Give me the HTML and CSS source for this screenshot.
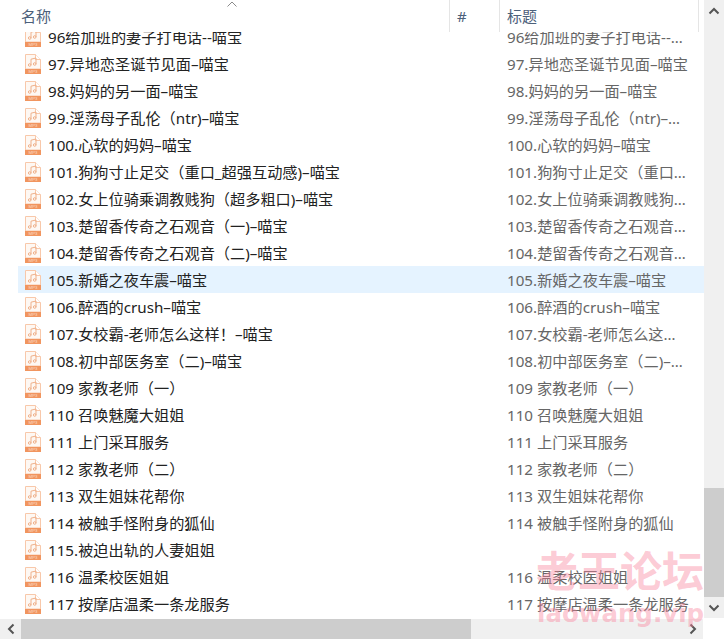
FILE: index.html
```html
<!DOCTYPE html>
<html>
<head>
<meta charset="utf-8">
<title>名称</title>
<link rel="stylesheet" href="styles.css">
</head>

<body>
<svg class="defs" width="0" height="0">
	<symbol id="mp3" viewBox="0 0 16 20">
		<path d="M0.5 0.5H10.5L15.5 5.5V15H0.5Z" fill="#fef8f3" stroke="#f8c8aa"/>
		<path d="M10.5 0.5V5.5H15.5" fill="#fff" stroke="#f8c8aa"/>
		<path d="M6 11V5.2L11 4V10" fill="none" stroke="#efb08a"/>
		<circle cx="4.7" cy="11" r="1.3" fill="none" stroke="#efb08a"/>
		<circle cx="9.7" cy="10" r="1.3" fill="none" stroke="#efb08a"/>
		<rect x="0" y="15" width="16" height="5" fill="#f1955f"/>
		<text x="8" y="19.2" text-anchor="middle" font-size="4.4" fill="#fbd9c4" font-family="Liberation Sans">MP3</text>
	</symbol>
</svg>

<div class="window">
	<div class="main">
		<div class="head">
			<div class="head_name">
				<svg class="caret" width="10" height="6" viewBox="0 0 10 6"><path d="M0.5 5.5L5 1L9.5 5.5" fill="none" stroke="#8a8a8a"/></svg>
				<span>名称</span>
			</div>
			<div class="head_num">#</div>
			<div class="head_title">标题</div>
			<div class="head_rest"></div>
		</div>

		<div class="list">
			<div class="rows">
				<div class="row"><svg class="icon"><use href="#mp3"/></svg><span class="name">96给加班的妻子打电话--喵宝</span><span class="title">96给加班的妻子打电话--喵宝</span></div>
				<div class="row"><svg class="icon"><use href="#mp3"/></svg><span class="name">97.异地恋圣诞节见面–喵宝</span><span class="title">97.异地恋圣诞节见面–喵宝</span></div>
				<div class="row"><svg class="icon"><use href="#mp3"/></svg><span class="name">98.妈妈的另一面–喵宝</span><span class="title">98.妈妈的另一面–喵宝</span></div>
				<div class="row"><svg class="icon"><use href="#mp3"/></svg><span class="name">99.淫荡母子乱伦（ntr)–喵宝</span><span class="title">99.淫荡母子乱伦（ntr)–喵宝</span></div>
				<div class="row"><svg class="icon"><use href="#mp3"/></svg><span class="name">100.心软的妈妈–喵宝</span><span class="title">100.心软的妈妈–喵宝</span></div>
				<div class="row"><svg class="icon"><use href="#mp3"/></svg><span class="name">101.狗狗寸止足交（重口_超强互动感)–喵宝</span><span class="title">101.狗狗寸止足交（重口_超强互动感)–喵宝</span></div>
				<div class="row"><svg class="icon"><use href="#mp3"/></svg><span class="name">102.女上位骑乘调教贱狗（超多粗口)–喵宝</span><span class="title">102.女上位骑乘调教贱狗（超多粗口)–喵宝</span></div>
				<div class="row"><svg class="icon"><use href="#mp3"/></svg><span class="name">103.楚留香传奇之石观音（一)–喵宝</span><span class="title">103.楚留香传奇之石观音（一)–喵宝</span></div>
				<div class="row"><svg class="icon"><use href="#mp3"/></svg><span class="name">104.楚留香传奇之石观音（二)–喵宝</span><span class="title">104.楚留香传奇之石观音（二)–喵宝</span></div>
				<div class="row row_on"><svg class="icon"><use href="#mp3"/></svg><span class="name">105.新婚之夜车震–喵宝</span><span class="title">105.新婚之夜车震–喵宝</span></div>
				<div class="row"><svg class="icon"><use href="#mp3"/></svg><span class="name">106.醉酒的crush–喵宝</span><span class="title">106.醉酒的crush–喵宝</span></div>
				<div class="row"><svg class="icon"><use href="#mp3"/></svg><span class="name">107.女校霸-老师怎么这样！–喵宝</span><span class="title">107.女校霸-老师怎么这样！–喵宝</span></div>
				<div class="row"><svg class="icon"><use href="#mp3"/></svg><span class="name">108.初中部医务室（二)–喵宝</span><span class="title">108.初中部医务室（二)–喵宝</span></div>
				<div class="row"><svg class="icon"><use href="#mp3"/></svg><span class="name">109 家教老师（一）</span><span class="title">109 家教老师（一）</span></div>
				<div class="row"><svg class="icon"><use href="#mp3"/></svg><span class="name">110 召唤魅魔大姐姐</span><span class="title">110 召唤魅魔大姐姐</span></div>
				<div class="row"><svg class="icon"><use href="#mp3"/></svg><span class="name">111 上门采耳服务</span><span class="title">111 上门采耳服务</span></div>
				<div class="row"><svg class="icon"><use href="#mp3"/></svg><span class="name">112 家教老师（二）</span><span class="title">112 家教老师（二）</span></div>
				<div class="row"><svg class="icon"><use href="#mp3"/></svg><span class="name">113 双生姐妹花帮你</span><span class="title">113 双生姐妹花帮你</span></div>
				<div class="row"><svg class="icon"><use href="#mp3"/></svg><span class="name">114 被触手怪附身的狐仙</span><span class="title">114 被触手怪附身的狐仙</span></div>
				<div class="row"><svg class="icon"><use href="#mp3"/></svg><span class="name">115.被迫出轨的人妻姐姐</span><span class="title"></span></div>
				<div class="row"><svg class="icon"><use href="#mp3"/></svg><span class="name">116 温柔校医姐姐</span><span class="title">116 温柔校医姐姐</span></div>
				<div class="row"><svg class="icon"><use href="#mp3"/></svg><span class="name">117 按摩店温柔一条龙服务</span><span class="title">117 按摩店温柔一条龙服务</span></div>
			</div>
		</div>

		<div class="hbar">
			<div class="bar_btn"><svg width="8" height="12" viewBox="0 0 8 12"><path d="M6.5 1.5L2 6L6.5 10.5" fill="none" stroke="#555" stroke-width="2"/></svg></div>
			<div class="hbar_thumb"></div>
			<div class="bar_fill"></div>
			<div class="bar_btn"><svg width="8" height="12" viewBox="0 0 8 12"><path d="M1.5 1.5L6 6L1.5 10.5" fill="none" stroke="#555" stroke-width="2"/></svg></div>
		</div>
	</div>

	<div class="vbar">
		<div class="bar_btn"><svg width="12" height="8" viewBox="0 0 12 8"><path d="M1.5 6.5L6 2L10.5 6.5" fill="none" stroke="#555" stroke-width="2"/></svg></div>
		<div class="bar_fill"></div>
		<div class="vbar_thumb"></div>
		<div class="bar_btn"><svg width="12" height="8" viewBox="0 0 12 8"><path d="M1.5 1.5L6 6L10.5 1.5" fill="none" stroke="#555" stroke-width="2"/></svg></div>
		<div class="vbar_end"></div>
	</div>

	<div class="mark">
		<div class="mark_cn">老王论坛</div>
		<div class="mark_en">laowang.vip</div>
	</div>
</div>
</body>
</html>
```
FILE: styles.css
```css
html,body{margin: 0;padding: 0;background: #fff;overflow: hidden;}
body{font-family: "Noto Sans","Noto Sans CJK SC",sans-serif;font-size: 15.2px;color: #222;}
.defs{display: block;height: 0;}

.window{position: relative;display: flex;width: 724px;height: 639px;overflow: hidden;}
.main{display: flex;flex-direction: column;width: 704px;}

/* header */
.head{display: flex;flex: none;height: 32px;color: #4c607a;font-size: 15px;background: #fff;position: relative;z-index: 1;}
.head_name{display: flex;flex-direction: column;width: 449px;padding-left: 21px;box-sizing: border-box;}
.caret{display: block;margin: 1px 0 0 206px;}
.head_name span{line-height: 18px;}
.head_num{width: 50px;padding-left: 7px;box-sizing: border-box;line-height: 32px;border-left: 1px solid #e5e5e5;}
.head_title{width: 200px;padding-left: 7px;box-sizing: border-box;line-height: 32px;border-left: 1px solid #e5e5e5;border-right: 1px solid #e5e5e5;}
.head_rest{flex: 1;}

/* rows */
.list{flex: 1;overflow: hidden;}
.rows{margin-top: -9px;padding-left: 18px;}
.row{display: flex;align-items: center;height: 27px;white-space: nowrap;}
.row_on{background: #e5f3ff;}
.icon{flex: none;width: 16px;height: 20px;margin-left: 7px;}
.name,.title{flex: none;box-sizing: border-box;height: 27px;padding-top: 2px;line-height: 25px;overflow: hidden;}
.name{width: 466px;padding-left: 7px;}
.title{width: 182px;color: #666;text-overflow: ellipsis;}

/* scrollbars */
.hbar{display: flex;flex: none;height: 20px;width: 703px;background: #f0f0f0;}
.vbar{display: flex;flex-direction: column;width: 20px;background: #f0f0f0;}
.bar_btn{display: flex;flex: none;align-items: center;justify-content: center;width: 21px;height: 20px;}
.vbar .bar_btn{width: 20px;height: 21px;}
.bar_fill{flex: 1;}
.hbar_thumb{width: 450px;background: #cdcdcd;}
.vbar_thumb{height: 109px;background: #cdcdcd;}
.vbar_end{height: 21px;background: #fff;}

/* watermark */
.mark{position: absolute;left: 536px;top: 546px;width: 170px;color: rgba(250,130,155,.42);font-weight: 700;pointer-events: none;}
.mark_cn{font-family: "Noto Sans CJK SC",sans-serif;font-size: 42px;line-height: 46px;white-space: nowrap;}
.mark_en{font-family: "DejaVu Sans",sans-serif;font-size: 24.5px;line-height: 32px;margin: 6px 0 0 1px;white-space: nowrap;}
```
